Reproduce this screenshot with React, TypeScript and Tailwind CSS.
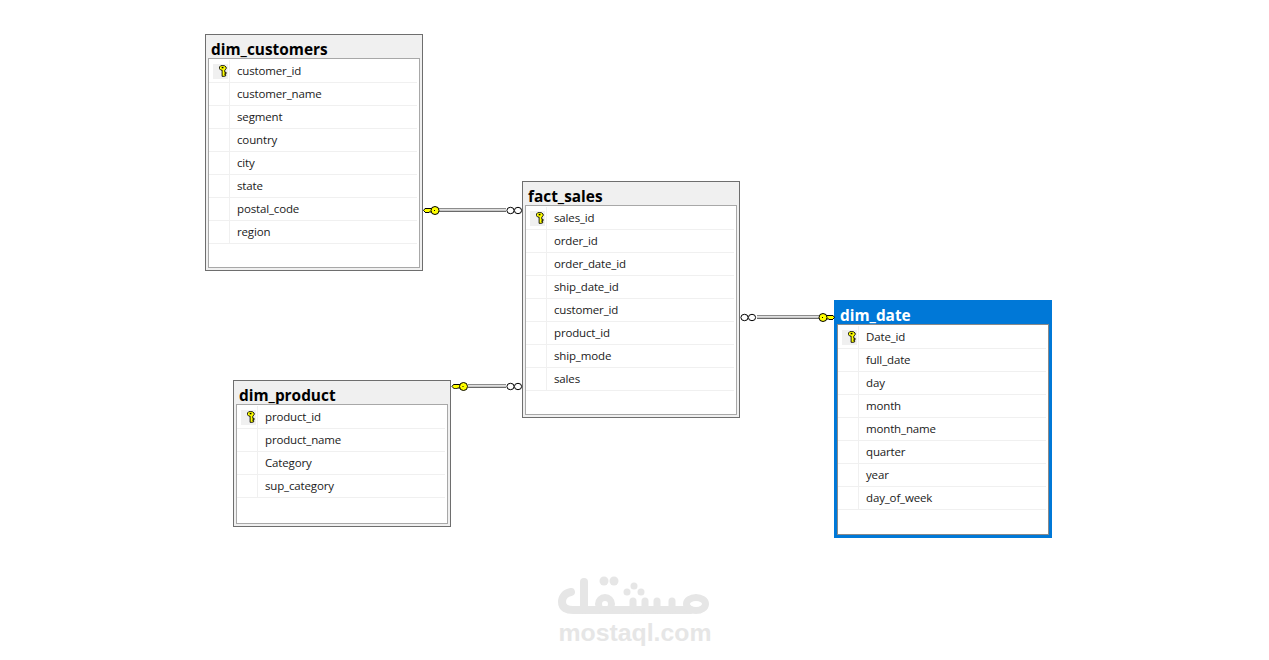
import React from "react";

interface TableProps {
  name: string;
  columns: string[];
  className: string;
  selected?: boolean;
}

const KeyIcon = () => (
  <svg width="8" height="12" viewBox="0 0 9 13" className="block">
    <path
      d="M2 .5H6L8 2V4L6.500 5.500V8H8V9.500H6.500V10.500H7.500V12L5.500 12.500H3.500V5.500H2L.5 4V2Z"
      fill="#ffff00"
      stroke="#000"
      strokeWidth="1"
    />
    <rect x="3" y="2" width="2" height="1.500" fill="#000" />
  </svg>
);

const Table: React.FC<TableProps> = ({ name, columns, className, selected }) => {
  return (
    <div
      className={`absolute w-[218px] flex flex-col border border-[#6e6e6e] ${className} ${
        selected ? "bg-[#0078d7]" : "bg-[#f0f0f0]"
      }`}
    >
      <div
        className={`text-[15.400px] leading-[22px] font-bold font-['Open_Sans',sans-serif] ${
          selected ? "h-[22px] text-white pl-[4px] pt-[3px]" : "h-[23px] text-black pl-[5px] pt-[4px]"
        }`}
      >
        {name}
      </div>
      <div
        className={`flex-1 flex flex-col border bg-white pt-[1px] pr-[2px] ${
          selected ? "mx-[1px] mb-[1px] border-[#8a8a8a]" : "mx-[2px] mb-[2px] border-[#a8a8a8]"
        }`}
      >
        {columns.map((col, i) => (
          <div key={col} className="h-[23px] flex border-b border-[#f0f0f0]">
            <div className="w-[21px] shrink-0 border-r border-[#f0f0f0] flex items-center justify-end pr-[1px]">
              {i === 0 && (
                <div className="w-[15px] h-[15px] bg-[#f0f0f0] flex items-center justify-end pr-[1px]">
                  <KeyIcon />
                </div>
              )}
            </div>
            <div className="pl-[7px] text-[11.500px] tracking-[-0.15px] leading-[22px] text-[#1a1a1a] font-['Open_Sans',sans-serif]">
              {col}
            </div>
          </div>
        ))}
      </div>
    </div>
  );
};

// yellow key end of a relationship line, pointing left or right
const KeyEnd = ({ cx, cy, dir }: { cx: number; cy: number; dir: 1 | -1 }) => (
  <g>
    <path
      d={`M${cx} ${cy - 2}H${cx + dir * 10}L${cx + dir * 11.500} ${cy}L${cx + dir * 9} ${cy + 2.500}L${cx + dir * 8} ${cy + 1.500}L${cx + dir * 7} ${cy + 2.500}L${cx + dir * 6} ${cy + 1.500}H${cx}Z`}
      fill="#ffff00"
      stroke="#000"
      strokeWidth="1"
    />
    <circle cx={cx} cy={cy} r="4" fill="#ffff00" stroke="#000" strokeWidth="1" />
    <rect x={cx - 1} y={cy - 0.500} width="1" height="1" fill="#000" />
  </g>
);

const Line = ({ x1, x2, y }: { x1: number; x2: number; y: number }) => (
  <g>
    <rect x={x1} y={y} width={x2 - x1} height="1" fill="#8c8c8c" />
    <rect x={x1} y={y + 1} width={x2 - x1} height="1" fill="#e0e0e0" />
    <rect x={x1} y={y + 2} width={x2 - x1} height="1" fill="#c8c8c8" />
    <rect x={x1} y={y + 3} width={x2 - x1} height="1" fill="#6a6a6a" />
  </g>
);

const Rings = ({ x, y }: { x: number; y: number }) => (
  <g fill="#fff" stroke="#000" strokeWidth="1">
    <ellipse cx={x} cy={y} rx="3.600" ry="3.200" />
    <ellipse cx={x + 7.500} cy={y} rx="3.600" ry="3.200" />
  </g>
);

const Connectors = () => (
  <svg width="1269" height="660" className="absolute left-0 top-0">
    <Line x1={439} x2={506} y={208} />
    <KeyEnd cx={435} cy={210.500} dir={-1} />
    <Rings x={510.500} y={210.500} />

    <Line x1={468} x2={506} y={384} />
    <KeyEnd cx={463.500} cy={386.500} dir={-1} />
    <Rings x={510.500} y={386.500} />

    <Line x1={757} x2={819} y={315} />
    <KeyEnd cx={823} cy={317.500} dir={1} />
    <Rings x={744.500} y={317.500} />
  </svg>
);

const Watermark = () => (
  <div className="absolute left-[540px] top-[570px] w-[190px] flex flex-col items-center">
    <svg width="190" height="50" viewBox="0 0 190 50" className="block">
      <g fill="none" stroke="#e6e6e6" strokeWidth="8" strokeLinecap="round" strokeLinejoin="round">
        <path d="M31 22C25 23 22 27 22 32C22 38 27 40 33 40H150" />
        <path d="M44 12V40" />
        <path d="M93 31V40M105 31V40M117 31V40M132 31V40" strokeWidth="7" />
        <ellipse cx="65" cy="34" rx="6.500" ry="6.500" strokeWidth="7" />
        <ellipse cx="156" cy="34" rx="9.500" ry="6.500" strokeWidth="7" />
      </g>
      <g fill="#e6e6e6">
        <circle cx="64" cy="11" r="4.500" />
        <circle cx="74" cy="11" r="4.500" />
        <circle cx="87" cy="22" r="3.500" />
        <circle cx="101" cy="22" r="3.500" />
        <circle cx="94" cy="16" r="3.500" />
      </g>
    </svg>
    <div className="text-[24.800px] leading-[26px] font-bold text-[#e6e6e6] font-['Liberation_Sans',sans-serif]">
      mostaql.com
    </div>
  </div>
);

export default function App() {
  return (
    <div className="relative w-[1269px] h-[660px] bg-white overflow-hidden">
      <Table
        name="dim_customers"
        className="left-[205px] top-[34px] h-[237px]"
        columns={["customer_id", "customer_name", "segment", "country", "city", "state", "postal_code", "region"]}
      />
      <Table
        name="fact_sales"
        className="left-[522px] top-[181px] h-[237px]"
        columns={["sales_id", "order_id", "order_date_id", "ship_date_id", "customer_id", "product_id", "ship_mode", "sales"]}
      />
      <Table
        name="dim_product"
        className="left-[233px] top-[380px] h-[147px]"
        columns={["product_id", "product_name", "Category", "sup_category"]}
      />
      <Table
        selected
        name="dim_date"
        className="left-[834px] top-[300px] h-[238px] border-[2px] border-[#0078d7]"
        columns={["Date_id", "full_date", "day", "month", "month_name", "quarter", "year", "day_of_week"]}
      />
      <Connectors />
      <Watermark />
    </div>
  );
}
